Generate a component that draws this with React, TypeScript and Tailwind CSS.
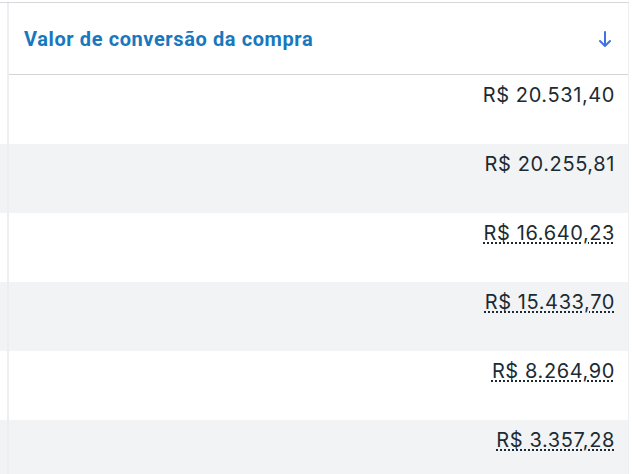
import React from 'react';

const rows = [
  { value: 'R$ 20.531,40', dotted: false },
  { value: 'R$ 20.255,81', dotted: false },
  { value: 'R$ 16.640,23', dotted: true },
  { value: 'R$ 15.433,70', dotted: true },
  { value: 'R$ 8.264,90', dotted: true },
  { value: 'R$ 3.357,28', dotted: true },
];

const App = () => {
  return (
    <div className="w-[636px] h-[474px] overflow-hidden bg-white pt-[2px]">
      <div className="border-t border-[#d6d8db] mr-[7px]">
        <div className="flex">
          <div className="w-[7px] shrink-0" />
          <div className="flex-1 border-l-2 border-r border-[#eceef0]">
            <div className="h-[72px] flex items-center justify-between pl-[15px] pr-[16px] border-b border-[#d2d4d7]">
              <span className="text-[20px] font-bold text-[#1877bd] tracking-[0.6px] font-['Roboto',sans-serif]">
                Valor de conversão da compra
              </span>
              <svg width="14" height="18" viewBox="0 0 14 18" fill="none" stroke="#3d74e2" strokeWidth="2" strokeLinecap="round" strokeLinejoin="round">
                <path d="M7 2v14M2 11l5 5 5-5" />
              </svg>
            </div>
          </div>
        </div>
      </div>
      <div className="mr-[7px]">
        {rows.map((r, i) => (
          <div key={i} className={`flex h-[69px] ${i % 2 === 1 ? 'bg-[#f2f3f5]' : 'bg-white'}`}>
            <div className="w-[7px] shrink-0" />
            <div className="flex-1 border-l-2 border-r border-[#eceef0] flex justify-end items-start pt-[7px] pr-[13px]">
              <span
                className={`text-[20px] leading-[26px] text-[#1c2b33] font-['Inter',sans-serif] tracking-[0.6px] ${
                  r.dotted ? 'underline decoration-dotted decoration-2 decoration-[#1c2b33] underline-offset-[2px]' : ''
                }`}
              >
                {r.value}
              </span>
            </div>
          </div>
        ))}
      </div>
    </div>
  );
};

export default App;
